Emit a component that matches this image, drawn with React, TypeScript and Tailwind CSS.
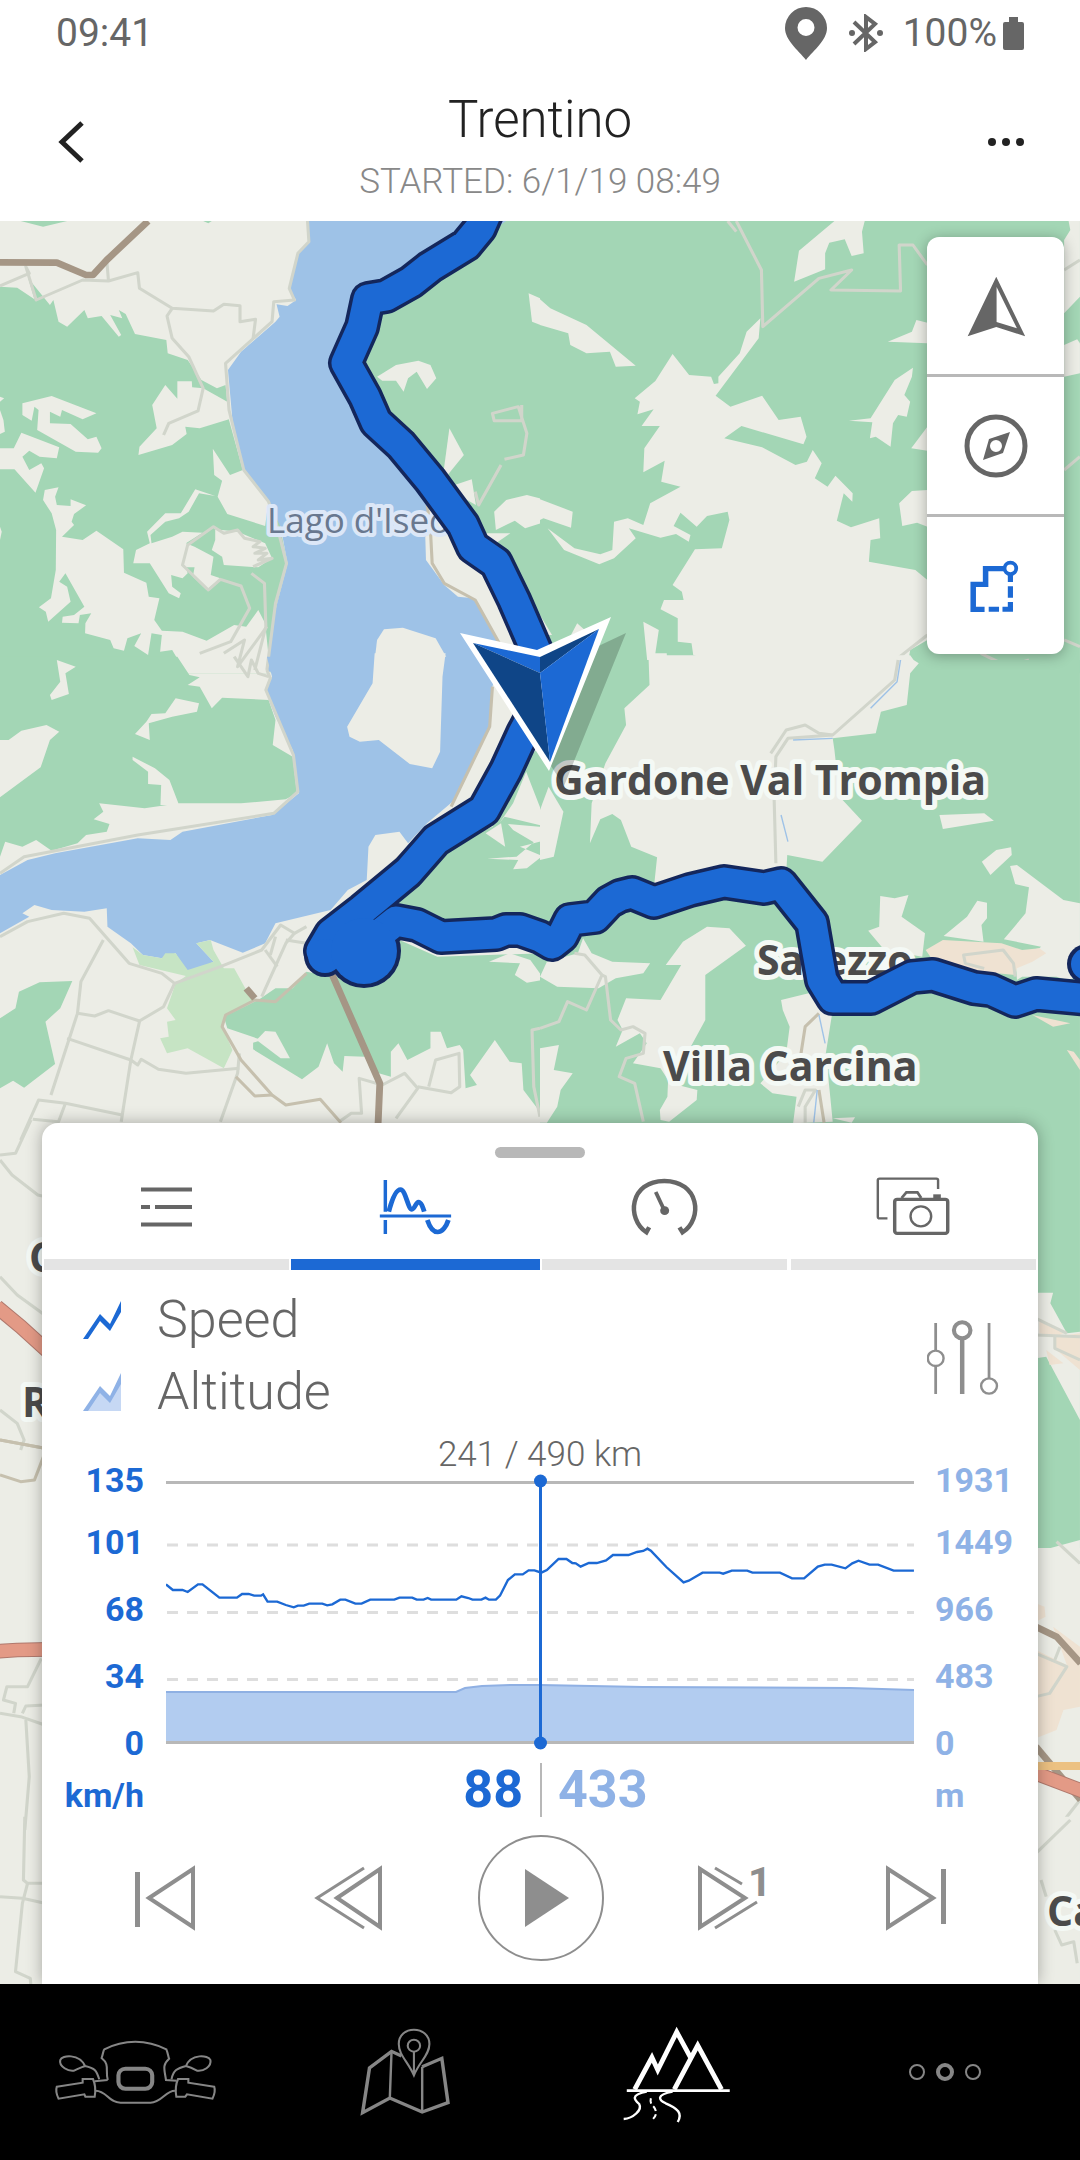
import type { ReactNode } from 'react';

// the map is drawn in tiles, each one with its own local units
type Tile = {
  place: string;
  forest?: string[];
  clearing?: string[];
  urban?: string[];
  water?: string[];
  island?: string[];
  park?: string[];
  road?: string[];
  tan?: string[];
  brown?: string[];
  river?: string[];
  highway?: string[];
};

const tiles: Tile[] = [
  {
    place: 'translate(0 210) scale(.34436 .33333)',
    forest: [
      '60,33 125,50 195,33',
      '0,230 50,233 100,268 82,205 145,285 155,270 170,335 195,350 245,300 255,325 295,318 345,380 352,375 320,315 355,325 345,300 365,312 392,372 483,390 487,430 545,450 585,510 630,535 655,525 665,630 705,780 775,870 810,900 815,960 835,1060 800,1200 785,1390 0,1390',
      '1445,33 1575,33 1575,1390 1530,1300 1400,960 1320,830 1110,600 1040,460 1060,300 1300,170',
      '590,33 605,40 615,33',
    ],
    clearing: [
      '65,580 150,558 280,610 240,628 180,600 175,620 145,605 145,640 205,642 255,688 280,680 295,715 285,728 220,725 108,660 112,600 100,590 92,632 65,615',
      '0,715 40,715 62,668 172,712 165,745 115,740 85,722 65,740 85,780 120,760 128,775 103,848 42,778 0,778',
      '0,560 12,565 0,575',
      '0,600 10,630 14,665 0,672',
      '0,950 5,965 0,990',
      '130,840 170,832 160,860 165,885 205,888 205,868 250,886 215,912 208,935 215,945 180,980 240,990 280,962 358,1018 360,1088 425,1118 432,1160 463,1165 448,1230 470,1262 530,1265 600,1292 680,1245 715,1250 750,1200 770,1240 785,1390 540,1390 500,1320 465,1325 470,1275 440,1270 430,1335 390,1308 410,1270 370,1285 360,1322 330,1315 320,1290 247,1270 248,1240 265,1210 232,1215 228,1240 180,1238 182,1220 215,1215 245,1190 190,1090 172,1115 195,1130 205,1175 140,1235 133,1205 113,1192 148,1165 162,1080 163,960 150,910 125,870',
      '165,1348 220,1372 210,1390 170,1390',
      '480,525 515,566 515,514 557,514 558,532 590,535 660,575 672,580 665,628 580,655 538,650 542,672 500,705 402,735 405,710 455,655 442,585',
      '618,716 668,795 705,780 780,870 770,948 660,912 632,860 645,812 622,795',
      '567,838 625,858 578,850 548,905 520,925 480,935 437,975 440,1000 500,980 530,965 588,968 540,1000 565,1010 620,1040 612,1095 640,1105 600,1140 560,1100 565,1072 540,1072 545,1090 530,1105 497,1095 500,1130 525,1150 520,1165 490,1150 435,1060 387,1060 395,1020 435,1000 427,965 480,910 525,910',
      '625,958 690,965 770,1000 790,1045 750,1072 650,1065 645,1040 615,1020 625,990',
      '1095,500 1150,465 1215,452 1250,465 1267,505 1240,537 1210,485 1185,505 1172,545 1150,512 1110,512',
      '1305,655 1347,735 1300,795 1288,785',
      '1320,825 1370,808 1382,885 1340,860',
      '1435,905 1470,870 1530,855 1575,867 1575,938 1525,955 1495,932 1440,960',
      '1400,970 1482,970 1440,1000',
      '1535,250 1575,268 1575,347 1545,335',
      '1230,880 1300,900 1400,1080 1500,1300 1450,1310 1330,1160',
    ],
    water: [
      '893,33 1470,33 1110,300 1040,480 1240,880 1250,960 1235,980 1237,1050 1290,1125 1330,1160 1375,1165 1450,1300 1430,1385 775,1385 800,1200 835,1060 815,950 775,870 705,780 675,630 662,480 700,425 800,335 812,320 803,283 835,288 860,270 838,235 865,130 900,95',
    ],
    island: ['1115,1258 1170,1253 1265,1285 1298,1345 1292,1390 1087,1390 1088,1350 1095,1290'],
    road: [
      '0,228 85,190 75,170 105,270 240,210 315,213 400,188 405,235 500,295 620,303 650,283 697,287 697,335 742,328 735,385',
      '500,295 485,318 500,385 548,440 590,535 575,603 490,640 475,675',
      '310,150 315,213',
      '893,33 897,95 865,130 840,235 855,270 795,275 790,335 655,460 665,600 708,780 780,875 805,950 832,1060 800,1180 775,1380',
      '735,1070 790,1045 750,1050 775,1030 740,1030 770,1015 735,1010 755,995 710,985 690,960 650,970 620,950 545,1005 530,1065 605,1140 640,1108 700,1128 725,1195 670,1295 580,1330',
      '730,1090 768,1120 772,1250 740,1380',
      '775,1250 690,1370 710,1290 650,1330',
      '1465,748 1520,735 1530,670 1505,590 1430,610 1435,632 1515,632 1515,585',
      '1455,765 1390,885 1380,845',
    ],
    tan: ['1240,880 1250,960 1255,1060 1290,1120 1380,1170 1450,1300'],
    brown: ['0,157 165,158 250,195 270,195 310,150 430,33'],
  },
  {
    place: 'translate(540 210) scale(.34436 .33333)',
    forest: ['0,33 1568,33 1568,1390 0,1390'],
    clearing: [
      '855,33 943,33 935,65 940,130 905,138 885,88 840,98 828,130 828,178 738,215 752,122',
      '0,268 30,295 135,345 278,467 220,470 203,425 135,430 88,405 82,370 0,345',
      '385,432 433,495 497,500 505,522 518,520 518,500 580,430 600,365 640,325 635,385 510,557 553,590 645,557 693,630 757,620 774,680 765,703 585,648 535,685 645,712 742,765 775,755 792,720 818,760 798,805 835,830 858,797 908,850 907,875 882,850 862,932 903,952 985,925 988,985 960,990 955,1055 1090,1080 1125,1110 1125,1290 1075,1320 1070,1350 1100,1360 1085,1390 315,1390 300,1235 345,1260 335,1330 368,1330 370,1360 440,1378 472,1345 445,1335 440,1300 400,1295 400,1225 350,1198 360,1170 417,1170 412,1145 385,1125 450,1018 528,1015 550,930 545,905 485,918 455,950 408,908 388,948 437,975 432,995 395,972 350,983 258,955 278,985 215,1045 172,1063 70,1020 22,955 100,1015 175,1033 210,1020 215,935 255,925 300,945 320,880 408,830 352,815 362,752 300,787 303,715 348,648 295,648 330,598 283,613 290,575 275,565 335,513',
      '1010,395 1080,365 1093,330 1125,338 1125,400',
      '1083,473 1080,500 1058,555 1075,575 1065,620 1040,615 1025,640 1018,710 975,680 958,685 965,637 897,632 960,625 1030,510',
      '1078,715 1125,650 1125,722',
      '1043,880 1080,843 1125,840 1125,950 1095,938 1052,948',
      '0,868 95,905 90,953 10,925 0,930',
      '1535,33 1568,33 1568,260 1522,310 1522,90 1540,60',
      '1522,405 1560,388 1568,400 1568,490 1522,500',
      '0,1215 35,1275 20,1275 0,1250',
      '108,1240 130,1260 90,1275',
    ],
    road: [
      '545,33 570,65',
      '570,33 643,180 647,350 810,205 905,180 845,240 1047,243 1043,105 1083,105 1125,165',
      '1125,1275 1045,1340 1030,1380',
      '1280,1330 1360,1370 1420,1350',
      '1522,780 1568,740',
      '1522,180 1568,150',
      '1522,1290 1568,1310',
    ],
  },
  {
    place: 'translate(0 660) scale(.34436 .33333)',
    forest: [
      '0,-10 515,-10 550,45 580,52 545,75 580,80 615,145 645,113 780,120 800,180 792,255 850,290 862,400 830,418 700,430 520,430 420,445 288,430 300,455 272,478 318,492 310,515 250,525 225,550 150,572 105,540 65,560 15,545 0,590',
      '55,995 115,967 210,963 175,1045 132,1085 160,1212 70,1283 38,1262 0,1285 0,1075 45,1045',
      '650,1070 750,1020 800,985 850,985 890,935 970,950 1060,940 1160,840 1270,890 1575,880 1575,1365 1520,1290 1515,1210 1480,1205 1437,1140 1365,1245 1385,1275 1352,1285 1345,1170 1335,1155 1298,1165 1280,1115 1250,1115 1250,1165 1183,1200 1157,1150 1135,1175 1135,1250 1100,1240 1060,1190 1000,1188 995,1235 970,1210 950,1150 925,1220 877,1258 735,1168 735,1148 760,1140 660,1105',
      '1130,760 1300,560 1430,500 1530,300 1575,250 1575,800 1290,800',
    ],
    clearing: [
      '0,240 25,240 62,212 135,195 172,215 145,240 118,322 0,412',
      '165,0 220,20 190,40 200,102 150,120 145,105 175,65',
      '510,115 578,130 572,155 500,170 432,190 435,240 392,222 425,185 440,162 480,160',
      '385,290 450,325 492,360 520,435 466,435 468,375 430,372 430,335 385,300',
      '770,1113 800,1115 842,1195 815,1195 745,1140',
      '1528,335 1575,460 1575,497 1465,470 1450,490 1490,430',
      '1410,520 1455,490 1467,560',
      '1475,492 1575,501 1575,543 1510,560 1575,588 1530,625 1490,628 1505,600 1415,596 1500,590 1550,547 1490,510',
      '1420,905 1480,880 1540,900 1575,950 1575,960 1530,968 1495,945 1510,910',
    ],
    water: [
      '775,-10 790,50 770,90 800,170 850,270 868,400 790,465 530,515 495,540 400,535 160,580 80,600 0,645 0,820 85,770 65,760 100,735 150,750 245,755 310,745 312,800 380,850 415,885 470,895 510,880 545,945 620,905 570,850 610,840 705,878 770,850 800,790 960,750 1010,690 1065,660 1070,560 1090,525 1160,515 1185,550 1240,490 1320,420 1420,200 1430,80 1450,-10',
    ],
    island: ['1088,-20 1082,70 1008,200 1015,230 1045,245 1100,240 1190,312 1255,325 1278,275 1285,50 1294,-20'],
    park: [
      '385,862 415,885 470,895 480,880 510,880 545,930 620,905 570,850 612,840 620,870 650,925 680,925 715,990 740,1020 650,1065 650,1110 675,1170 650,1225 545,1165 485,1180 465,1135 490,1130 485,1085 510,1080 485,1045 510,970 540,948 405,915',
    ],
    road: [
      '775,30 785,55 772,90 852,285 865,395 795,460 400,525 70,590 0,640',
      '0,830 80,785 185,760 260,775 375,910 470,940 507,970 640,920 760,870 815,795 855,820 890,800',
      '300,840 235,965 225,1060 148,1305',
      '225,1060 275,1068 315,1052 405,1083 475,1040 507,970',
      '195,1135 380,1200 400,1215 410,1198 460,1228 540,1240 695,1225',
      '405,1085 380,1200 352,1385',
      '855,820 830,850 760,1010',
      '770,870 805,920',
      '785,885 800,830',
      '830,840 890,850',
      '60,1440 112,1320 190,1330 355,1365',
      '190,1330 170,1385 95,1378',
      '695,1180 690,1240 640,1385',
      '985,1385 1020,1360 1050,1360 1043,1255 1110,1275 1175,1240 1213,1285 1150,1375',
      '1213,1280 1310,1298 1335,1280 1333,1180 1265,1200 1245,1280',
      '1568,1105 1545,1110 1550,1280 1568,1370',
      '680,-10 720,50 730,0 750,40 780,50',
    ],
    tan: [
      '890,940 800,1025 740,1020 655,1065 645,1100 700,1200 790,1305 830,1335 930,1318 990,1388',
      '685,1250 740,1308 790,1305',
      '1430,80 1422,200 1310,440',
      '1180,570 1130,620',
    ],
    brown: ['965,945 1103,1270 1098,1390', '715,985 740,1015'],
  },
  {
    place: 'translate(540 660) scale(.34436 .33333)',
    forest: ['0,0 1568,0 1568,2664 1440,2664 1400,1440 0,1440'],
    clearing: [
      '315,-14 318,75 245,145 250,195 190,310 150,430 145,550 175,478 210,462 235,480 265,560 340,592 330,690 650,640 715,640 718,585 820,605 935,482 870,410 855,270 850,235 975,220 990,155 1065,135 1075,40 1100,10 1085,0 1075,-14',
      '0,450 25,380 68,455 40,590 0,600',
      '1160,465 1290,460 1318,482 1170,507',
      '1283,605 1325,570 1368,562 1370,585 1308,645',
      '1365,618 1385,615 1520,720 1568,730 1568,950 1530,960 1500,950 1400,950 1385,960 1380,880 1450,865 1455,860 1347,838 1410,760 1420,682 1380,672',
      '1270,722 1298,728 1298,775 1282,795 1288,845 1172,828 1240,770',
      '988,708 1030,715 1070,705 1050,770 1118,820 1110,890 1000,870 953,812 985,800',
      '485,800 550,805 598,857 480,945 480,1080 380,1270 457,1290 455,1320 375,1385 350,1380 348,1350 370,1310 372,1260 350,1225 270,1210 310,1150 290,1120 220,1160 240,1110 225,1080 250,1015 350,1020 410,915 365,915 415,845',
      '0,950 20,905 110,880 125,835 150,880 210,905 320,910 300,940 220,955 170,985 50,980',
      '700,1020 780,1000 850,1050 830,1180 840,1280 850,1385 735,1390 745,1310 675,1300 640,1270 715,1180 725,1100 705,1050',
      '0,1165 55,1155 40,1230 95,1240 60,1290 50,1340 20,1388 0,1388',
      '850,1375 915,1372 905,1388',
    ],
    urban: [
      '1120,870 1170,840 1340,850 1400,870 1450,865 1470,880 1430,905 1385,925 1380,945 1230,930 1140,900',
      '1430,1065 1540,1090 1490,1100',
      '1530,1170 1550,1175 1568,1200 1568,1230',
    ],
    road: [
      '1040,0 1030,60 850,225 720,235 685,290 680,420 685,610',
      '850,225 810,220 770,195 715,210 670,280',
      '100,880 130,885 180,945 135,1050 80,1025 55,1085 0,1105',
      '180,945 190,950 205,1080 235,1110 270,1100 305,1120 300,1180 250,1195 230,1250 275,1270 300,1385',
      '750,1340 770,1290 800,1290 770,1340 770,1388',
      '1380,950 1375,910 1345,870 1230,885 1235,910 1290,925',
    ],
    tan: ['810,1060 770,1100 755,1200', '810,1290 825,1388'],
    river: ['1047,0 1037,65 960,145', '735,240 850,235', '700,465 720,545', '810,1065 828,1150', '805,1290 795,1388'],
  },
  {
    place: 'translate(0 1120) scale(.34436 .33333)',
    road: [
      '90,0 45,100 0,105',
      '0,120 35,165 110,225 130,230',
      '0,470 50,525 130,585',
      '0,870 50,910 70,960 60,990',
    ],
    tan: ['0,960 130,985'],
    highway: ['-10,560 60,620 140,695'],
  },
  {
    place: 'translate(540 1120) scale(.34436 .33333)',
    clearing: ['1440,518 1490,518 1482,550 1530,640 1568,635 1568,900 1470,710 1440,715'],
    urban: ['1450,595 1520,640 1500,650 1450,640', '1495,650 1568,640 1568,750 1500,690', '1470,690 1520,730 1480,735'],
    road: ['1440,595 1530,640', '1440,645 1568,650', '1495,650 1495,685 1568,720'],
  },
  {
    place: 'translate(0 1430) scale(.34436 .33333)',
    road: [
      '120,685 80,770 20,770 10,810 45,820 40,850',
      '0,850 60,860 130,885',
      '65,850 75,828 130,825',
      '75,870 85,1040 72,1200',
    ],
    tan: ['0,30 130,55', '130,70 100,150 60,155 0,135'],
    highway: ['-10,664 50,660 140,658'],
  },
  {
    place: 'translate(540 1430) scale(.34436 .33333)',
    clearing: ['1440,360 1480,355 1568,330 1568,1210 1440,1210'],
    urban: [
      '1440,520 1465,530 1468,560 1440,575',
      '1490,590 1568,650 1568,830 1520,840 1500,900 1440,925 1440,660 1530,705',
    ],
    road: ['1500,335 1568,400', '1440,670 1530,710 1480,790 1440,800', '1510,650 1495,690', '1568,1110 1500,1200'],
    brown: ['1440,590 1500,620 1570,700', '1440,950 1570,1110'],
    highway: ['1440,1030 1580,1085'],
  },
  {
    place: 'translate(0 1820) scale(.34436 .33333)',
    road: ['72,-10 68,180 80,190 130,190', '0,230 65,235 130,250', '80,190 65,250 45,455 88,475 90,500'],
  },
  {
    place: 'translate(540 1820) scale(.34436 .33333)',
    clearing: ['1435,-10 1568,-10 1568,500 1435,500'],
    road: ['1440,100 1540,0', '1455,180 1470,230', '1495,330 1515,375 1550,365 1560,430'],
  },
];

const route =
  'M490 205L480 228L466 245L430 267L411 282L386 296L368 299L362 327L346 363L365 397L376 422L401 445L430 480L463 525L473 547L496 563L514 600L540 660L546 690L523 733L506 770L484 810L436 840L408 872L362 910L331 934L321 951L340 940L362 963L372 940L396 921L417 925L441 937L496 934L506 930L520 930L540 937L552 944L562 936L570 920L595 917L609 902L620 896L632 893L654 902L690 890L724 882L764 888L781 884L812 923L817 952L822 980L833 998L871 998L912 977L933 975L974 988L991 990L1015 1001L1036 994L1100 1000';

const places = [
  { name: 'Gardone Val Trompia', x: 554, y: 795 },
  { name: 'Sarezzo', x: 757, y: 975 },
  { name: 'Villa Carcina', x: 663, y: 1081 },
  { name: 'C', x: 29, y: 1272 },
  { name: 'R', x: 22, y: 1417 },
  { name: 'Ca', x: 1047, y: 1926 },
];

const speedScale = ['135', '101', '68', '34', '0'];
const altitudeScale = ['1931', '1449', '966', '483', '0'];

function Polygons({ shapes = [], className }: { shapes?: string[]; className: string }) {
  return (
    <>
      {shapes.map((points) => (
        <polygon key={points} points={points} className={className} />
      ))}
    </>
  );
}

function Lines({ shapes = [], className }: { shapes?: string[]; className: string }) {
  return (
    <>
      {shapes.map((points) => (
        <polyline key={points} points={points} className={className} fill="none" strokeLinejoin="round" />
      ))}
    </>
  );
}

function MapView() {
  return (
    <svg
      className="absolute inset-0 h-full w-full bg-[#ecede6]"
      viewBox="0 221 1080 1763"
      preserveAspectRatio="xMidYMin slice"
      role="img"
      aria-label="Map"
    >
      {tiles.map((tile) => (
        <g key={tile.place} transform={tile.place}>
          <Polygons shapes={tile.forest} className="fill-[#a3d6b5]" />
          <Polygons shapes={tile.clearing} className="fill-[#ecede6]" />
          <Polygons shapes={tile.urban} className="fill-[#efe2d2]" />
          <Polygons shapes={tile.water} className="fill-[#9ec2e7]" />
          <Polygons shapes={tile.island} className="fill-[#ecede6]" />
          <Polygons shapes={tile.park} className="fill-[#c6e4c4]" />
          <Lines shapes={tile.road} className="stroke-[#d1d5cb] stroke-9" />
          <Lines shapes={tile.tan} className="stroke-[#c6c0ae] stroke-9" />
          <Lines shapes={tile.brown} className="stroke-[#a59685] stroke-20" />
          <Lines shapes={tile.river} className="stroke-[#9ec2e7] stroke-4" />
          <Lines shapes={tile.highway} className="stroke-[#b0796d] stroke-44" />
          <Lines shapes={tile.highway} className="stroke-[#e39a86] stroke-38" />
        </g>
      ))}
      <path d="M1036 1766H1082" className="stroke-[#ecc182] stroke-8" />

      <text
        x="267"
        y="533"
        className="fill-[#69788f] stroke-[#dce7f7] stroke-8 font-['Open_Sans',sans-serif] text-[35px] [paint-order:stroke]"
        strokeLinejoin="round"
      >
        Lago d'Iseo
      </text>
      {places.map((place) => (
        <text
          key={place.name}
          x={place.x}
          y={place.y}
          className="fill-[#4b4b4b] stroke-[#f4f9f5] stroke-10 font-['Open_Sans',sans-serif] text-[41px] font-bold [paint-order:stroke]"
          strokeLinejoin="round"
        >
          {place.name}
        </text>
      ))}

      {/* travelled route */}
      <g strokeLinejoin="round" strokeLinecap="round">
        <path d={route} fill="none" className="stroke-[#14275c] stroke-36" />
        <circle cx="325" cy="956" r="21" className="fill-[#14275c]" />
        <circle cx="364" cy="951" r="37" className="fill-[#14275c]" />
        <circle cx="1087" cy="964" r="20" className="fill-[#14275c]" />
        <path d={route} fill="none" className="stroke-[#1c69d4] stroke-29" />
        <circle cx="325" cy="956" r="17" className="fill-[#1c69d4]" />
        <circle cx="364" cy="951" r="33" className="fill-[#1c69d4]" />
        <circle cx="1087" cy="964" r="16" className="fill-[#1c69d4]" />
      </g>

      {/* current position */}
      <path d="M475 649L552 668L626 633L564 786Z" fill="#000" opacity=".2" />
      <path d="M460 633L537 650L611 617L549 771Z" fill="#fff" />
      <path d="M473 643L540 657V673Z" fill="#1c69d4" />
      <path d="M473 643L540 673L550 762Z" fill="#0f4587" />
      <path d="M599 629L540 657V673Z" fill="#0f4587" />
      <path d="M599 629L540 673L550 762Z" fill="#1c69d4" />
    </svg>
  );
}

function MapControls() {
  const button = 'flex h-[137px] w-full items-center justify-center';
  return (
    <div className="absolute top-4 right-4 w-[137px] divide-y-3 divide-[#b8b8b8] rounded-xl bg-white shadow-[0_2px_14px_rgba(0,0,0,0.3)]">
      <div>
        <button className={button} aria-label="North up">
          <svg className="h-16 w-16" fill="#666">
            <g transform="translate(-423 -63) scale(.34436 .33333)">
              <path d="M1322 197L1406 376L1322 348L1239 376ZM1323 228V333L1382 352Z" fillRule="evenodd" />
            </g>
          </svg>
        </button>
      </div>
      <div>
        <button className={button} aria-label="Compass">
          <svg className="h-16 w-16" viewBox="0 0 64 64">
            <circle cx="32" cy="32" r="29" fill="none" stroke="#666" strokeWidth="5" />
            <path
              d="M46 18L39 39L19 46L25 25ZM38 32a6 6 0 1 0 -12 0a6 6 0 1 0 12 0Z"
              fill="#666"
              fillRule="evenodd"
            />
          </svg>
        </button>
      </div>
      <div>
        <button className={button} aria-label="Show whole route">
          <svg className="h-16 w-16" fill="none" stroke="#1c69d4" strokeWidth="16">
            <g transform="translate(-424 -343) scale(.34436 .33333)">
              <path d="M1350 1073H1294V1120H1258V1195H1291" />
              <path d="M1303 1195H1333M1343 1195H1366V1173M1366 1160V1126M1366 1113V1092" strokeWidth="15" />
              <circle cx="1366" cy="1072" r="17" strokeWidth="11" />
            </g>
          </svg>
        </button>
      </div>
    </div>
  );
}

function Tab({ label, active, children }: { label: string; active?: boolean; children: ReactNode }) {
  return (
    <button role="tab" aria-selected={!!active} aria-label={label} className="flex flex-col items-center pt-[17px]">
      <svg className="h-16 w-20" fill="none" stroke={active ? '#1c69d4' : '#666'}>
        {children}
      </svg>
      <span className={active ? 'mt-5 flex w-full' : 'mt-5 flex w-full px-[2px]'}>
        <span className={active ? 'h-[11px] flex-1 bg-[#1c69d4]' : 'h-[11px] flex-1 bg-[#e4e4e4]'} />
      </span>
    </button>
  );
}

function Tabs() {
  return (
    <div role="tablist" className="grid grid-cols-4">
      <Tab label="Details">
        <path d="M14 14.500H65M14 32H23M28 32H65M14 49.500H65" strokeWidth="4" />
      </Tab>
      <Tab label="Chart" active>
        <g transform="translate(-376 -55) scale(.34436 .33333)">
          <path d="M1119 180V275M1119 300V342" strokeWidth="10" />
          <path d="M1103 288H1310" strokeWidth="9" />
          <path
            d="M1129 275C1138 240 1150 209 1163 209C1178 209 1185 268 1196 268C1204 268 1208 246 1215 246C1223 246 1228 262 1232 275M1241 300C1248 322 1259 336 1271 336C1284 336 1296 320 1302 300"
            strokeWidth="14"
          />
        </g>
      </Tab>
      <Tab label="Dashboard">
        <g transform="translate(-85 -55) scale(.34436 .33333)">
          <path d="M317 322L309 337C250 295 260 183 361 183C462 183 475 295 414 337L405 322" strokeWidth="13" />
          <path d="M336 216L361 271" strokeWidth="11" />
          <circle cx="362" cy="272" r="13" fill="#666" stroke="none" />
        </g>
      </Tab>
      <Tab label="Photos">
        <g transform="translate(-334 -55) scale(.34436 .33333)">
          <path d="M1156 207V181Q1156 176 1151 176H986Q981 176 981 181V290Q981 295 986 295H1009" strokeWidth="7" />
          <rect x="1030" y="238" width="154" height="102" rx="7" strokeWidth="10" />
          <path d="M1050 234L1064 217H1096L1107 234" strokeWidth="8" />
          <path d="M1142 229H1164" strokeWidth="12" />
          <circle cx="1106" cy="289" r="30" strokeWidth="7" />
        </g>
      </Tab>
    </div>
  );
}

function Legend() {
  return (
    <div className="mt-[14px] flex items-center justify-between pr-[39px] pl-[41px]">
      <ul className="text-[52px] leading-[72px] font-light text-[#666]">
        <li className="flex items-center gap-9">
          <svg className="h-[38px] w-[38px]">
            <path d="M0 38L17 13L27 23L38 0V11L27 30L17 20L5 38Z" fill="#1c69d4" />
          </svg>
          Speed
        </li>
        <li className="flex items-center gap-9">
          <svg className="h-[38px] w-[38px]">
            <path d="M2 38L17 16L27 26L38 6V38Z" fill="#c6d8f4" />
            <path d="M0 38L17 13L27 23L38 0V11L27 30L17 20L5 38Z" fill="#8fb2e6" />
          </svg>
          Altitude
        </li>
      </ul>
      <button aria-label="Chart settings">
        <svg className="h-[78px] w-[72px]" fill="none" stroke="#8e8e8e">
          <g transform="translate(-387 -198) scale(.34436 .33333)">
            <path d="M1149 612V694M1149 742V825M1304 612V777" strokeWidth="8" />
            <path d="M1226 660V825" strokeWidth="13" />
            <circle cx="1149" cy="718" r="23" strokeWidth="7" />
            <circle cx="1226" cy="634" r="24" strokeWidth="12" />
            <circle cx="1304" cy="801" r="23" strokeWidth="7" />
          </g>
        </svg>
      </button>
    </div>
  );
}

function Scale({ values, className }: { values: string[]; className: string }) {
  return (
    <ul className={`mt-[23px] grid grid-rows-[62px_67px_67px_67px_40px] text-[34px] leading-10 font-bold ${className}`}>
      {values.map((value) => (
        <li key={value}>{value}</li>
      ))}
    </ul>
  );
}

function Chart() {
  return (
    <div className="mt-[9px] grid grid-cols-[124px_1fr_124px]">
      <Scale values={speedScale} className="pr-[22px] text-right text-[#1c69d4]" />
      <div className="min-w-0">
        <p className="text-center text-[35px] leading-9 font-light text-[#666]">241 / 490 km</p>
        <svg className="h-[290px] w-full" viewBox="0 0 748 290" preserveAspectRatio="none" fill="none">
          <path d="M1 72H748M1 139.500H748M1 206.500H748" stroke="#dedede" strokeWidth="3" strokeDasharray="11 9" />
          <path d="M0 9.500H748" stroke="#b8b8b8" strokeWidth="3" />
          <path d="M0 269V219H290L299 215L316 213L344 212H374L477 214L684 215L748 217V269Z" fill="#b2ccf0" />
          <path d="M0 219H290L299 215L316 213L344 212H374L477 214L684 215L748 217" stroke="#8fb0e3" strokeWidth="2" />
          <path d="M0 269.500H748" stroke="#b8b8b8" strokeWidth="3" />
          <g transform="translate(-166 -43) scale(.34436 .33333)" stroke="#1c69d4" strokeWidth="7">
            <path d="M482 463L502 480H530L545 486L575 463H588L637 503H688L703 492H722L738 497H758L764 493L777 515H805L830 525L853 532L865 527H882L898 521H936L950 526L965 523L988 509H1003L1032 521H1050L1075 509H1145L1160 503H1197L1210 509H1230L1242 504L1252 509H1325L1340 499L1360 504L1372 509H1398L1410 503L1420 509H1440L1452 497L1475 450L1495 433H1518L1535 421H1552L1572 428L1588 420L1622 387H1645L1662 399L1672 400L1686 410L1710 399H1733L1760 391L1780 375H1825L1850 366L1868 363L1880 356L1890 362L1935 411L1985 457L2000 452L2040 428H2090L2100 431L2125 422H2170L2185 428H2265L2300 445H2335L2375 410L2395 404H2415L2455 415L2475 400L2493 392L2525 404H2550L2595 422H2654" />
          </g>
          <path d="M374.500 8V270" stroke="#1c69d4" strokeWidth="3" />
          <circle cx="374.500" cy="8" r="6.500" fill="#1c69d4" />
          <circle cx="374.500" cy="270" r="6.500" fill="#1c69d4" />
        </svg>
      </div>
      <Scale values={altitudeScale} className="pl-[21px] text-[#8fb2e6]" />
    </div>
  );
}

function Readings() {
  return (
    <dl className="grid grid-cols-[124px_1fr_1fr_124px] items-baseline leading-[54px] font-bold">
      <dt className="pr-[22px] text-right text-[34px] text-[#1c69d4]">km/h</dt>
      <dd className="pr-[17px] text-right text-[52px] text-[#1c69d4]">88</dd>
      <dd className="border-l-2 border-[#b8b8b8] pl-4 text-[52px] text-[#8fb2e6]">433</dd>
      <dt className="pl-[21px] text-[34px] text-[#8fb2e6]">m</dt>
    </dl>
  );
}

function Player() {
  const icon = 'h-20 w-20 overflow-visible';
  return (
    <div className="mt-[13px] grid grid-cols-5 place-items-center pr-7 pb-[23px] pl-[30px]">
      <button aria-label="To start">
        <svg className={icon} fill="none" stroke="#8e8e8e">
          <path d="M11.500 14V69" strokeWidth="5" />
          <path d="M23 40L67 11V69Z" strokeWidth="4" />
        </svg>
      </button>
      <button aria-label="Slower">
        <svg className={icon} fill="none" stroke="#8e8e8e">
          <path d="M51 10L4 40L51 70" strokeWidth="3" />
          <path d="M24 40L67 11V69Z" strokeWidth="4" />
        </svg>
      </button>
      <button
        aria-label="Play"
        className="flex h-[126px] w-[126px] items-center justify-center rounded-full border-2 border-[#8e8e8e]"
      >
        <svg className="h-[58px] w-[58px]">
          <path d="M13 0L57 29L13 58Z" fill="#8e8e8e" />
        </svg>
      </button>
      <button aria-label="Faster">
        <svg className={icon} fill="none" stroke="#8e8e8e">
          <path d="M11 11L56 40L11 69Z" strokeWidth="4" />
          <path d="M26 10L53 26M68 44L26 70" strokeWidth="3" />
          <text x="59" y="38" fill="#8e8e8e" stroke="none" className="text-[41px] font-bold">
            1
          </text>
        </svg>
      </button>
      <button aria-label="To end">
        <svg className={icon} fill="none" stroke="#8e8e8e">
          <path d="M12 11L57 40L12 69Z" strokeWidth="4" />
          <path d="M67.500 11V66" strokeWidth="5" />
        </svg>
      </button>
    </div>
  );
}

function BottomNav() {
  const link = 'flex items-center justify-center';
  return (
    <nav className="grid h-44 shrink-0 grid-cols-4 bg-black">
      <a href="#ride" aria-label="Ride" className={link}>
        <svg className="h-24 w-40 overflow-visible" fill="none" stroke="#868686" strokeWidth="6">
          <g transform="translate(-55 -204) scale(.34436 .33333)">
            <path d="M313 780C305 750 320 735 295 714C300 700 300 690 303 688Q345 665 393 665Q440 665 483 688C488 700 488 708 491 716C470 735 478 750 482 780L513 782M313 780L275 784M278 812C310 812 315 848 350 848H437C470 848 480 812 508 812" />
            <path d="M288 778C280 750 275 745 247 738C230 700 180 705 175 720C170 740 200 755 215 752C230 745 240 740 247 738M498 778C503 750 515 745 540 738C555 700 605 705 611 720C615 740 590 755 572 752C560 745 548 740 540 738" />
            <path d="M165 800L240 788V777H270Q280 800 275 830H248L245 823L170 836Q160 815 165 800ZM622 800L547 788V777H517Q507 800 512 830H538L543 823L617 836Q627 815 622 800Z" />
            <rect x="344" y="746" width="98" height="60" rx="20" strokeWidth="12" />
          </g>
        </svg>
      </a>
      <a href="#map" aria-label="Map" className={link}>
        <svg className="h-24 w-24 overflow-visible" fill="none" stroke="#868686">
          <g transform="translate(-357 -204) scale(.34436 .33333)">
            <path d="M1166 708L1137 694L1073 744L1053 878L1132 834L1226 876L1301 848L1283 715L1226 740" strokeWidth="10" />
            <path d="M1137 694L1132 834M1226 740V876" strokeWidth="7" />
            <path d="M1202 766C1185 725 1158 705 1158 672C1158 645 1178 629 1202 629C1226 629 1247 645 1247 672C1247 705 1218 725 1202 766ZM1202 695V760" strokeWidth="6" />
            <circle cx="1202" cy="677" r="18" strokeWidth="6" />
          </g>
        </svg>
      </a>
      <a href="#trips" aria-label="Trips" aria-current="page" className={link}>
        <svg className="h-24 w-28 overflow-visible" fill="none" stroke="#fff">
          <g transform="translate(-79 -204) scale(.34436 .33333)">
            <path d="M275 808L325 712L342 750L397 636L437 712M390 808L458 676L527 808" strokeWidth="14" />
            <path d="M252 812H551" strokeWidth="8" />
            <path d="M310 815C260 825 275 840 288 852C298 870 270 895 243 897M385 815C335 825 345 840 365 850C400 865 415 880 400 906" strokeWidth="7" />
            <path d="M322 835Q318 850 330 860Q345 880 328 897" strokeWidth="6" strokeDasharray="16 10" />
          </g>
        </svg>
      </a>
      <a href="#more" aria-label="More" className={link}>
        <svg className="h-6 w-20" fill="none" stroke="#868686">
          <circle cx="12" cy="12" r="7" strokeWidth="2" />
          <circle cx="40" cy="12" r="7" strokeWidth="4" />
          <circle cx="68" cy="12" r="7" strokeWidth="2" />
        </svg>
      </a>
    </nav>
  );
}

export default function App() {
  return (
    <div className="flex min-h-screen flex-col bg-white font-['Roboto',sans-serif]">
      {/* ================= STATUS BAR ================= */}
      <div className="flex h-[66px] items-center justify-between px-14 text-[39px] leading-[66px] text-[#666]">
        <span>09:41</span>
        <div className="flex items-center">
          <svg className="h-[53px] w-[42px]" viewBox="0 0 42 53" fill="#666">
            <path
              d="M21 0A21 21 0 0 0 0 21C0 33 13 43 21 53C29 43 42 33 42 21A21 21 0 0 0 21 0ZM21 12A8 8 0 1 1 21 29A8 8 0 1 1 21 12Z"
              fillRule="evenodd"
            />
          </svg>
          <svg className="ml-[22px] h-[38px] w-[34px]" viewBox="0 0 34 38" fill="none" stroke="#666" strokeWidth="4">
            <path d="M5 8L26 28L17 35V3L26 10L5 30" />
            <circle cx="3" cy="19" r="3" fill="#666" stroke="none" />
            <circle cx="31" cy="19" r="3" fill="#666" stroke="none" />
          </svg>
          <span className="ml-5">100%</span>
          <svg className="ml-[6px] h-[33px] w-[21px]" viewBox="0 0 21 33" fill="#666">
            <path d="M6 0H15V5H19Q21 5 21 7V31Q21 33 19 33H2Q0 33 0 31V7Q0 5 2 5H6Z" />
          </svg>
        </div>
      </div>

      {/* ================= HEADER ================= */}
      <header className="grid grid-cols-[120px_1fr_120px] items-center pt-5 pb-[11px] text-center">
        <button aria-label="Back" className="pb-3 pl-14">
          <svg className="h-11 w-7" fill="none" stroke="#222" strokeWidth="5">
            <path d="M26 3L6 22L26 41" />
          </svg>
        </button>
        <div>
          <h1 className="text-[51px] leading-[68px] font-light text-[#222]">Trentino</h1>
          <p className="text-[35px] leading-[56px] font-light text-[#888]">STARTED: 6/1/19 08:49</p>
        </div>
        <button aria-label="More options" className="flex justify-end pr-14 pb-3">
          <svg className="h-2 w-9" fill="#222">
            <circle cx="4" cy="4" r="4" />
            <circle cx="18" cy="4" r="4" />
            <circle cx="32" cy="4" r="4" />
          </svg>
        </button>
      </header>

      {/* ================= MAP + PANEL ================= */}
      <main className="relative flex flex-1 flex-col justify-end overflow-hidden pt-[500px]">
        <MapView />
        <MapControls />
        <section className="relative mx-[42px] rounded-t-2xl bg-white pt-6 shadow-[0_0_16px_rgba(0,0,0,0.3)]">
          <div className="mx-auto h-[11px] w-[90px] rounded-full bg-[#b8b8b8]" />
          <Tabs />
          <Legend />
          <Chart />
          <Readings />
          <Player />
        </section>
      </main>

      <BottomNav />
    </div>
  );
}
